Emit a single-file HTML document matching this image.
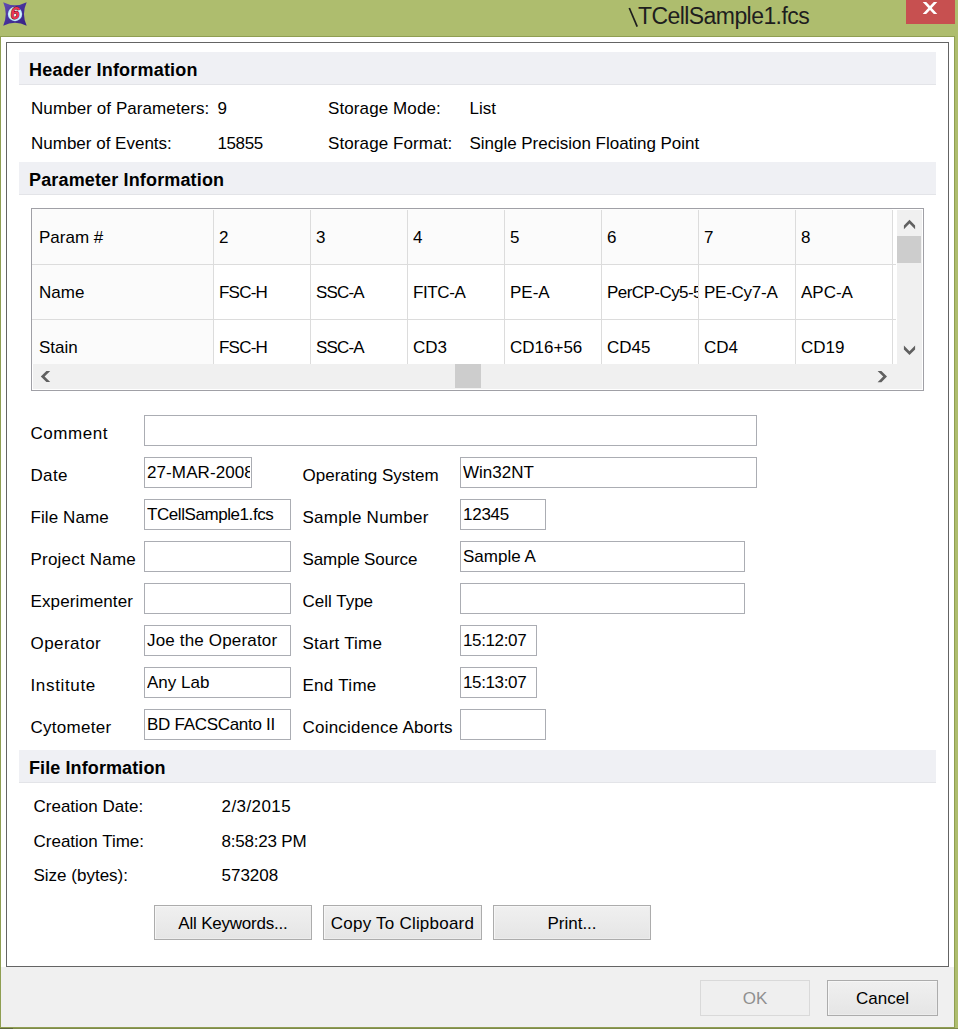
<!DOCTYPE html>
<html><head><meta charset="utf-8"><style>
html,body{margin:0;padding:0;width:958px;height:1029px;overflow:hidden;background:#aebd6e;}
body{position:relative;font-family:"Liberation Sans",sans-serif;color:#000;}
.r{position:absolute;}
.t{position:absolute;white-space:nowrap;font-family:"Liberation Sans",sans-serif;}
</style></head><body>
<div class="r" style="left:0px;top:0px;width:958px;height:1029px;background:#aebd6e;"></div>
<div class="r" style="left:0px;top:37px;width:1px;height:992px;background:#8f9e52;"></div>
<div class="r" style="left:954px;top:37px;width:1px;height:992px;background:#8f9e52;"></div>
<div class="r" style="left:0px;top:36px;width:955px;height:1px;background:#8f9e52;"></div>
<div class="r" style="left:0px;top:1027px;width:955px;height:1px;background:#8f9e52;"></div>
<div class="r" style="left:0px;top:1028px;width:958px;height:1px;background:#7e894c;"></div>
<div class="r" style="left:0px;top:1028px;width:13px;height:1px;background:#5e6640;"></div>
<div class="r" style="left:1px;top:37px;width:953px;height:930px;background:#ffffff;"></div>
<div class="r" style="left:1px;top:967px;width:953px;height:60px;background:#f0f0f0;"></div>
<svg class="r" style="left:620px;top:0px" width="30" height="34"><path d="M9.3 8 L17.2 26.6" stroke="#1e1e1e" stroke-width="1.7"/></svg>
<div class="t" style="left:638px;top:3px;font-size:23px;line-height:26px;color:#1e1e1e;letter-spacing:-0.57px;">TCellSample1.fcs</div>
<div class="r" style="left:906px;top:0px;width:49px;height:24px;background:#c75050;"></div>
<svg class="r" style="left:918px;top:0px" width="24" height="18" viewBox="0 0 24 18"><path d="M4.70 2.00 L8.20 2.00 L12.00 6.10 L15.80 2.00 L19.30 2.00 L13.75 8.00 L19.30 14.00 L15.80 14.00 L12.00 9.90 L8.20 14.00 L4.70 14.00 L10.25 8.00 Z" fill="#fff"/></svg>
<svg class="r" style="left:2px;top:1px" width="26" height="26" viewBox="0 0 26 26">
<defs><linearGradient id="ig" x1="0" y1="0" x2="1" y2="1"><stop offset="0" stop-color="#6550b4"/><stop offset="0.5" stop-color="#45309a"/><stop offset="1" stop-color="#372284"/></linearGradient>
<radialGradient id="rg" cx="0.5" cy="0.5" r="0.5"><stop offset="0.6" stop-color="#ffffff"/><stop offset="1" stop-color="#a8e2f6"/></radialGradient></defs>
<path d="M1.2 1.3 Q13 7.3 24.7 1.3 Q19.2 13 24.7 24.7 Q13 18.7 1.2 24.7 Q6.3 13 1.2 1.3 Z" fill="url(#ig)"/>
<circle cx="13" cy="13" r="7.2" fill="url(#rg)"/>
<text x="12.9" y="18.4" text-anchor="middle" font-family="Liberation Sans" font-weight="bold" font-style="italic" font-size="16" fill="#ee3350" stroke="#4a0810" stroke-width="0.9" paint-order="stroke">6</text>
</svg>
<div class="r" style="left:6px;top:42px;width:943px;height:925px;border:1px solid #646464;box-sizing:border-box;"></div>
<div class="r" style="left:19px;top:52px;width:917px;height:33px;background:#eff0f4;"></div>
<div class="r" style="left:19px;top:84px;width:917px;height:1px;background:#e3e4e8;"></div>
<div class="t" style="left:29px;top:60px;font-size:18px;line-height:20px;font-weight:bold;letter-spacing:0.206px;">Header Information</div>
<div class="r" style="left:19px;top:162px;width:917px;height:33px;background:#eff0f4;"></div>
<div class="r" style="left:19px;top:194px;width:917px;height:1px;background:#e3e4e8;"></div>
<div class="t" style="left:29px;top:170px;font-size:18px;line-height:20px;font-weight:bold;letter-spacing:0.15px;">Parameter Information</div>
<div class="r" style="left:19px;top:750px;width:917px;height:33px;background:#eff0f4;"></div>
<div class="r" style="left:19px;top:782px;width:917px;height:1px;background:#e3e4e8;"></div>
<div class="t" style="left:29px;top:758px;font-size:18px;line-height:20px;font-weight:bold;letter-spacing:0.1px;">File Information</div>
<div class="t" style="left:31px;top:99px;font-size:17px;line-height:19px;letter-spacing:0.08px;">Number of Parameters:</div>
<div class="t" style="left:217.5px;top:99px;font-size:17px;line-height:19px;">9</div>
<div class="t" style="left:328px;top:99px;font-size:17px;line-height:19px;letter-spacing:0.1px;">Storage Mode:</div>
<div class="t" style="left:469.5px;top:99px;font-size:17px;line-height:19px;">List</div>
<div class="t" style="left:31px;top:134px;font-size:17px;line-height:19px;">Number of Events:</div>
<div class="t" style="left:217.5px;top:134px;font-size:17px;line-height:19px;letter-spacing:-0.4px;">15855</div>
<div class="t" style="left:328px;top:134px;font-size:17px;line-height:19px;letter-spacing:0.1px;">Storage Format:</div>
<div class="t" style="left:469.5px;top:134px;font-size:17px;line-height:19px;letter-spacing:-0.03px;">Single Precision Floating Point</div>
<div class="r" style="left:31px;top:208px;width:893px;height:183px;border:1px solid #a0a0a6;box-sizing:border-box;background:#fff;"></div>
<div class="r" style="left:32px;top:209px;width:865px;height:155px;background:#ffffff;"></div>
<div class="r" style="left:32px;top:209px;width:860px;height:55px;background:#fbfbfb;"></div>
<div class="r" style="left:32px;top:264px;width:181px;height:100px;background:#fbfbfb;"></div>
<div class="r" style="left:213px;top:210px;width:1px;height:154px;background:#dcdcdc;"></div>
<div class="r" style="left:310px;top:210px;width:1px;height:154px;background:#dcdcdc;"></div>
<div class="r" style="left:407px;top:210px;width:1px;height:154px;background:#dcdcdc;"></div>
<div class="r" style="left:504px;top:210px;width:1px;height:154px;background:#dcdcdc;"></div>
<div class="r" style="left:601px;top:210px;width:1px;height:154px;background:#dcdcdc;"></div>
<div class="r" style="left:698px;top:210px;width:1px;height:154px;background:#dcdcdc;"></div>
<div class="r" style="left:795px;top:210px;width:1px;height:154px;background:#dcdcdc;"></div>
<div class="r" style="left:892px;top:210px;width:1px;height:154px;background:#dcdcdc;"></div>
<div class="r" style="left:32px;top:264px;width:864px;height:1px;background:#dcdcdc;"></div>
<div class="r" style="left:32px;top:319px;width:864px;height:1px;background:#dcdcdc;"></div>
<div class="r" style="left:32px;top:209px;width:865px;height:155px;overflow:hidden"><div class="t" style="left:7px;top:19px;width:174px;overflow:hidden;font-size:17px;line-height:19px;letter-spacing:0px;">Param #</div>
<div class="t" style="left:187px;top:19px;width:91px;overflow:hidden;font-size:17px;line-height:19px;letter-spacing:0px;">2</div>
<div class="t" style="left:284px;top:19px;width:91px;overflow:hidden;font-size:17px;line-height:19px;letter-spacing:0px;">3</div>
<div class="t" style="left:381px;top:19px;width:91px;overflow:hidden;font-size:17px;line-height:19px;letter-spacing:0px;">4</div>
<div class="t" style="left:478px;top:19px;width:91px;overflow:hidden;font-size:17px;line-height:19px;letter-spacing:0px;">5</div>
<div class="t" style="left:575px;top:19px;width:91px;overflow:hidden;font-size:17px;line-height:19px;letter-spacing:0px;">6</div>
<div class="t" style="left:672px;top:19px;width:91px;overflow:hidden;font-size:17px;line-height:19px;letter-spacing:0px;">7</div>
<div class="t" style="left:769px;top:19px;width:91px;overflow:hidden;font-size:17px;line-height:19px;letter-spacing:0px;">8</div>
<div class="t" style="left:7px;top:74px;width:174px;overflow:hidden;font-size:17px;line-height:19px;letter-spacing:0px;">Name</div>
<div class="t" style="left:187px;top:74px;width:91px;overflow:hidden;font-size:17px;line-height:19px;letter-spacing:-0.78px;">FSC-H</div>
<div class="t" style="left:284px;top:74px;width:91px;overflow:hidden;font-size:17px;line-height:19px;letter-spacing:-0.85px;">SSC-A</div>
<div class="t" style="left:381px;top:74px;width:91px;overflow:hidden;font-size:17px;line-height:19px;letter-spacing:-0.4px;">FITC-A</div>
<div class="t" style="left:478px;top:74px;width:91px;overflow:hidden;font-size:17px;line-height:19px;letter-spacing:0px;">PE-A</div>
<div class="t" style="left:575px;top:74px;width:91px;overflow:hidden;font-size:17px;line-height:19px;letter-spacing:-0.55px;">PerCP-Cy5-5-A</div>
<div class="t" style="left:672px;top:74px;width:91px;overflow:hidden;font-size:17px;line-height:19px;letter-spacing:-0.25px;">PE-Cy7-A</div>
<div class="t" style="left:769px;top:74px;width:91px;overflow:hidden;font-size:17px;line-height:19px;letter-spacing:0px;">APC-A</div>
<div class="t" style="left:7px;top:129px;width:174px;overflow:hidden;font-size:17px;line-height:19px;letter-spacing:0px;">Stain</div>
<div class="t" style="left:187px;top:129px;width:91px;overflow:hidden;font-size:17px;line-height:19px;letter-spacing:-0.78px;">FSC-H</div>
<div class="t" style="left:284px;top:129px;width:91px;overflow:hidden;font-size:17px;line-height:19px;letter-spacing:-0.85px;">SSC-A</div>
<div class="t" style="left:381px;top:129px;width:91px;overflow:hidden;font-size:17px;line-height:19px;letter-spacing:0px;">CD3</div>
<div class="t" style="left:478px;top:129px;width:91px;overflow:hidden;font-size:17px;line-height:19px;letter-spacing:0px;">CD16+56</div>
<div class="t" style="left:575px;top:129px;width:91px;overflow:hidden;font-size:17px;line-height:19px;letter-spacing:0px;">CD45</div>
<div class="t" style="left:672px;top:129px;width:91px;overflow:hidden;font-size:17px;line-height:19px;letter-spacing:0px;">CD4</div>
<div class="t" style="left:769px;top:129px;width:91px;overflow:hidden;font-size:17px;line-height:19px;letter-spacing:0px;">CD19</div>
</div>
<div class="r" style="left:897px;top:210px;width:25px;height:154px;background:#f0f0f0;"></div>
<div class="r" style="left:897px;top:236px;width:24px;height:27px;background:#cdcdcd;"></div>
<div class="r" style="left:33px;top:364px;width:889px;height:25px;background:#f0f0f0;"></div>
<div class="r" style="left:455px;top:364px;width:26px;height:24px;background:#cdcdcd;"></div>
<svg class="r" style="left:0;top:0" width="958" height="1029" viewBox="0 0 958 1029"><path d="M909.50 219.80 L915.10 225.40 L915.10 229.20 L909.50 223.60 L903.90 229.20 L903.90 225.40 Z" fill="#606060"/><path d="M909.50 355.00 L915.10 349.40 L915.10 345.60 L909.50 351.20 L903.90 345.60 L903.90 349.40 Z" fill="#606060"/><path d="M40.80 376.50 L46.40 370.90 L50.20 370.90 L44.60 376.50 L50.20 382.10 L46.40 382.10 Z" fill="#606060"/><path d="M887.00 376.60 L881.40 371.00 L877.60 371.00 L883.20 376.60 L877.60 382.20 L881.40 382.20 Z" fill="#606060"/></svg>
<div class="t" style="left:30.5px;top:424px;font-size:17px;line-height:19px;letter-spacing:0.533px;">Comment</div>
<div class="r" style="left:144px;top:415px;width:613px;height:31px;border:1px solid #abadb3;box-sizing:border-box;background:#fff;"></div>
<div class="t" style="left:30.5px;top:466px;font-size:17px;line-height:19px;letter-spacing:0.333px;">Date</div>
<div class="r" style="left:144px;top:457px;width:108px;height:31px;border:1px solid #abadb3;box-sizing:border-box;background:#fff;"></div>
<div class="t" style="left:147px;top:463px;width:103px;overflow:hidden;font-size:17px;line-height:19px;letter-spacing:0.1px;">27-MAR-2008</div>
<div class="t" style="left:30.5px;top:508px;font-size:17px;line-height:19px;letter-spacing:0.088px;">File Name</div>
<div class="r" style="left:144px;top:499px;width:147px;height:31px;border:1px solid #abadb3;box-sizing:border-box;background:#fff;"></div>
<div class="t" style="left:147px;top:505px;width:142px;overflow:hidden;font-size:17px;line-height:19px;letter-spacing:-0.43px;">TCellSample1.fcs</div>
<div class="t" style="left:30.5px;top:550px;font-size:17px;line-height:19px;letter-spacing:0.209px;">Project Name</div>
<div class="r" style="left:144px;top:541px;width:147px;height:31px;border:1px solid #abadb3;box-sizing:border-box;background:#fff;"></div>
<div class="t" style="left:30.5px;top:592px;font-size:17px;line-height:19px;letter-spacing:0.118px;">Experimenter</div>
<div class="r" style="left:144px;top:583px;width:147px;height:31px;border:1px solid #abadb3;box-sizing:border-box;background:#fff;"></div>
<div class="t" style="left:30.5px;top:634px;font-size:17px;line-height:19px;letter-spacing:0.457px;">Operator</div>
<div class="r" style="left:144px;top:625px;width:147px;height:31px;border:1px solid #abadb3;box-sizing:border-box;background:#fff;"></div>
<div class="t" style="left:147px;top:631px;width:142px;overflow:hidden;font-size:17px;line-height:19px;letter-spacing:0.17px;">Joe the Operator</div>
<div class="t" style="left:30.5px;top:676px;font-size:17px;line-height:19px;letter-spacing:0.65px;">Institute</div>
<div class="r" style="left:144px;top:667px;width:147px;height:31px;border:1px solid #abadb3;box-sizing:border-box;background:#fff;"></div>
<div class="t" style="left:147px;top:673px;width:142px;overflow:hidden;font-size:17px;line-height:19px;letter-spacing:0px;">Any Lab</div>
<div class="t" style="left:30.5px;top:718px;font-size:17px;line-height:19px;letter-spacing:0.275px;">Cytometer</div>
<div class="r" style="left:144px;top:709px;width:147px;height:31px;border:1px solid #abadb3;box-sizing:border-box;background:#fff;"></div>
<div class="t" style="left:147px;top:715px;width:142px;overflow:hidden;font-size:17px;line-height:19px;letter-spacing:-0.29px;">BD FACSCanto II</div>
<div class="t" style="left:302.5px;top:466px;font-size:17px;line-height:19px;letter-spacing:0px;">Operating System</div>
<div class="r" style="left:460px;top:457px;width:297px;height:31px;border:1px solid #abadb3;box-sizing:border-box;background:#fff;"></div>
<div class="t" style="left:463px;top:463px;width:292px;overflow:hidden;font-size:17px;line-height:19px;letter-spacing:0px;">Win32NT</div>
<div class="t" style="left:302.5px;top:508px;font-size:17px;line-height:19px;letter-spacing:0.25px;">Sample Number</div>
<div class="r" style="left:460px;top:499px;width:86px;height:31px;border:1px solid #abadb3;box-sizing:border-box;background:#fff;"></div>
<div class="t" style="left:463px;top:505px;width:81px;overflow:hidden;font-size:17px;line-height:19px;letter-spacing:-0.25px;">12345</div>
<div class="t" style="left:302.5px;top:550px;font-size:17px;line-height:19px;letter-spacing:-0.108px;">Sample Source</div>
<div class="r" style="left:460px;top:541px;width:285px;height:31px;border:1px solid #abadb3;box-sizing:border-box;background:#fff;"></div>
<div class="t" style="left:463px;top:547px;width:280px;overflow:hidden;font-size:17px;line-height:19px;letter-spacing:0px;">Sample A</div>
<div class="t" style="left:302.5px;top:592px;font-size:17px;line-height:19px;letter-spacing:0px;">Cell Type</div>
<div class="r" style="left:460px;top:583px;width:285px;height:31px;border:1px solid #abadb3;box-sizing:border-box;background:#fff;"></div>
<div class="t" style="left:302.5px;top:634px;font-size:17px;line-height:19px;letter-spacing:0.222px;">Start Time</div>
<div class="r" style="left:460px;top:625px;width:77px;height:31px;border:1px solid #abadb3;box-sizing:border-box;background:#fff;"></div>
<div class="t" style="left:463px;top:631px;width:72px;overflow:hidden;font-size:17px;line-height:19px;letter-spacing:-0.37px;">15:12:07</div>
<div class="t" style="left:302.5px;top:676px;font-size:17px;line-height:19px;letter-spacing:0.286px;">End Time</div>
<div class="r" style="left:460px;top:667px;width:77px;height:31px;border:1px solid #abadb3;box-sizing:border-box;background:#fff;"></div>
<div class="t" style="left:463px;top:673px;width:72px;overflow:hidden;font-size:17px;line-height:19px;letter-spacing:-0.37px;">15:13:07</div>
<div class="t" style="left:302.5px;top:718px;font-size:17px;line-height:19px;letter-spacing:0.212px;">Coincidence Aborts</div>
<div class="r" style="left:460px;top:709px;width:86px;height:31px;border:1px solid #abadb3;box-sizing:border-box;background:#fff;"></div>
<div class="t" style="left:33.5px;top:797px;font-size:17px;line-height:19px;">Creation Date:</div>
<div class="t" style="left:221.5px;top:797px;font-size:17px;line-height:19px;letter-spacing:0.43px;">2/3/2015</div>
<div class="t" style="left:33.5px;top:832px;font-size:17px;line-height:19px;">Creation Time:</div>
<div class="t" style="left:221.5px;top:832px;font-size:17px;line-height:19px;letter-spacing:-0.2px;">8:58:23 PM</div>
<div class="t" style="left:33.5px;top:866px;font-size:17px;line-height:19px;">Size (bytes):</div>
<div class="t" style="left:221.5px;top:866px;font-size:17px;line-height:19px;letter-spacing:0px;">573208</div>
<div class="r btn" style="left:154px;top:905px;width:158px;height:35px;border:1px solid #acacac;background:linear-gradient(#f0f0f0,#e5e5e5);color:#000;box-shadow:inset 1px 1px 0 #f6f6f6, inset -1px -1px 0 #ececec;box-sizing:border-box;"><span style="position:absolute;left:0;right:0;top:8px;text-align:center;font-size:17px;line-height:19px;letter-spacing:-0.21px;">All Keywords...</span></div>
<div class="r btn" style="left:323px;top:905px;width:159px;height:35px;border:1px solid #acacac;background:linear-gradient(#f0f0f0,#e5e5e5);color:#000;box-shadow:inset 1px 1px 0 #f6f6f6, inset -1px -1px 0 #ececec;box-sizing:border-box;"><span style="position:absolute;left:0;right:0;top:8px;text-align:center;font-size:17px;line-height:19px;letter-spacing:0.22px;">Copy To Clipboard</span></div>
<div class="r btn" style="left:493px;top:905px;width:158px;height:35px;border:1px solid #acacac;background:linear-gradient(#f0f0f0,#e5e5e5);color:#000;box-shadow:inset 1px 1px 0 #f6f6f6, inset -1px -1px 0 #ececec;box-sizing:border-box;"><span style="position:absolute;left:0;right:0;top:8px;text-align:center;font-size:17px;line-height:19px;letter-spacing:0px;">Print...</span></div>
<div class="r btn" style="left:700px;top:980px;width:110px;height:36px;border:1px solid #d9d9d9;background:#efefef;color:#8f8f8f;box-sizing:border-box;"><span style="position:absolute;left:0;right:0;top:8px;text-align:center;font-size:17px;line-height:19px;letter-spacing:0px;">OK</span></div>
<div class="r btn" style="left:827px;top:980px;width:111px;height:36px;border:1px solid #acacac;background:linear-gradient(#f0f0f0,#e5e5e5);color:#000;box-shadow:inset 1px 1px 0 #f6f6f6, inset -1px -1px 0 #ececec;box-sizing:border-box;"><span style="position:absolute;left:0;right:0;top:8px;text-align:center;font-size:17px;line-height:19px;letter-spacing:0px;">Cancel</span></div>
</body></html>
